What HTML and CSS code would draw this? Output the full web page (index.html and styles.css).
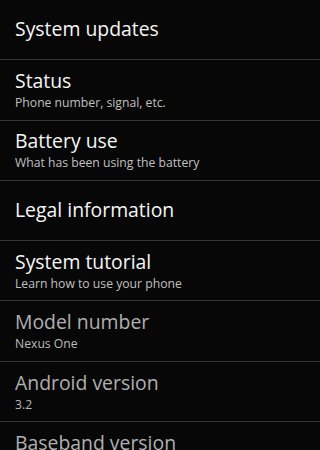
FILE: index.html
```html
<!DOCTYPE html>
<html>
<head>
<meta charset="utf-8">
<link rel="stylesheet" href="styles.css">
</head>
<body>
<ul class="list">
  <li class="row single"><div class="title">System updates</div></li>
  <li class="row"><div class="title">Status</div><div class="summary">Phone number, signal, etc.</div></li>
  <li class="row"><div class="title">Battery use</div><div class="summary">What has been using the battery</div></li>
  <li class="row single"><div class="title">Legal information</div></li>
  <li class="row"><div class="title">System tutorial</div><div class="summary">Learn how to use your phone</div></li>
  <li class="row disabled"><div class="title">Model number</div><div class="summary">Nexus One</div></li>
  <li class="row disabled"><div class="title">Android version</div><div class="summary">3.2</div></li>
  <li class="row disabled"><div class="title">Baseband version</div></li>
</ul>
</body>
</html>
```
FILE: styles.css
```css
html, body {
  margin: 0;
  padding: 0;
  background: #070707;
  height: 100%;
  overflow: hidden;
}
body {
  font-family: "Open Sans", "Noto Sans", "DejaVu Sans", sans-serif;
  color: #f6f6f6;
}
.list {
  list-style: none;
  margin: 0;
  padding: 0;
}
.row {
  box-sizing: border-box;
  height: 60.3px;
  border-bottom: 1px solid #363636;
  padding: 8.8px 0 0 15px;
  overflow: hidden;
}
.row.single {
  padding-top: 17.2px;
}
.title {
  font-size: 19.4px;
  line-height: 24px;
  white-space: nowrap;
}
.summary {
  font-size: 12.2px;
  line-height: 19.5px;
  color: #c0c0c0;
  white-space: nowrap;
}
.disabled .title {
  color: #b0b0b0;
}
.disabled .summary {
  color: #bcbcbc;
}
```
